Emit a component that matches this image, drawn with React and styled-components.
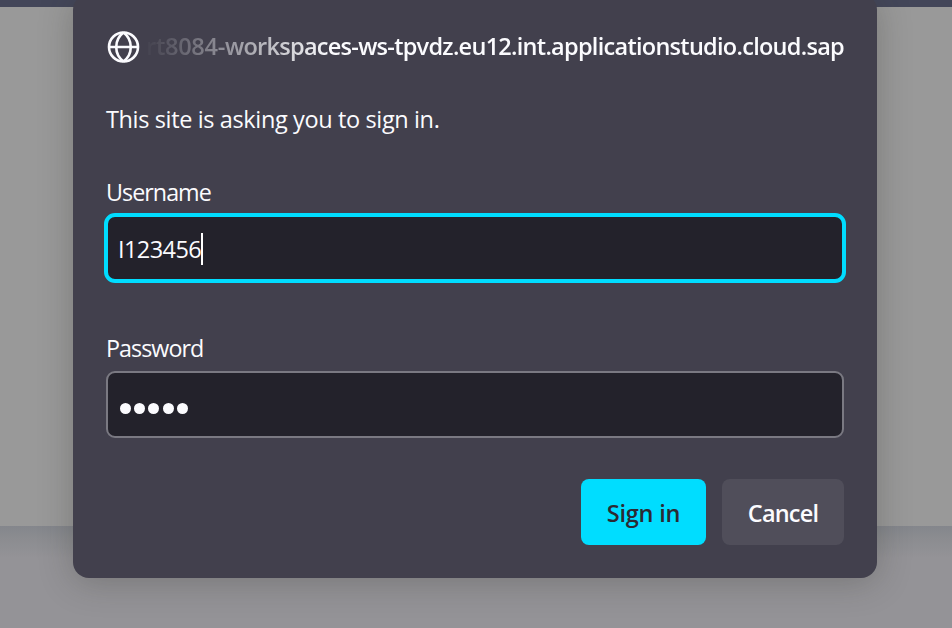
import React from "react";
import styled, { createGlobalStyle } from "styled-components";

const GlobalStyle = createGlobalStyle`
  * { box-sizing: border-box; }
  body {
    margin: 0;
    overflow: hidden;
    font-family: "Open Sans", "Noto Sans", sans-serif;
    color: #fbfbfe;
  }
`;

const Page = styled.div`
  width: 952px;
  height: 628px;
  overflow: hidden;
  display: flex;
  justify-content: center;
  align-items: flex-start;
  padding-right: 2px;
  background:
    linear-gradient(#434659, #434659) 0 0 / 100% 7px no-repeat,
    linear-gradient(#999999, #999999) 0 7px / 100% 519px no-repeat,
    linear-gradient(#84868c, #8b8c90 12px, #949397 32px) 0 526px / 100% 102px no-repeat;
`;

const Dialog = styled.form`
  width: 804px;
  height: 584px;
  margin: -6px 0 0;
  padding: 34px 33px 33px;
  border-radius: 16px;
  background: #42404d;
  box-shadow: 0 4px 34px rgba(40, 40, 34, 0.27);
  display: flex;
  flex-direction: column;
`;

const Header = styled.header`
  display: flex;
  align-items: center;
  height: 36px;
  gap: 4px;
`;

const GlobeIcon = styled.svg`
  flex: none;
  width: 34px;
  height: 34px;
  fill: none;
  stroke: #fbfbfe;
  stroke-width: 2.6;
`;

const Host = styled.div`
  flex: 1;
  display: flex;
  justify-content: flex-end;
  overflow: hidden;
  white-space: nowrap;
  font-size: 23.5px;
  line-height: 36px;
  font-weight: 600;
  mask-image: linear-gradient(to right, transparent, #000 187px);
`;

const Text = styled.span`
  letter-spacing: ${(p) => p.$tracking || 0}px;
`;

const Message = styled.p`
  margin: 37px 0 0;
  font-size: 23.5px;
  line-height: 36px;
`;

const Label = styled.label`
  margin-top: ${(p) => p.$gap}px;
  font-size: 23.3px;
  line-height: 36px;
`;

const Field = styled.div`
  display: flex;
  align-items: center;
  height: ${(p) => (p.$focused ? 70 : 67)}px;
  margin: ${(p) => (p.$focused ? "3px -2px 0" : "5px 0 0")};
  padding: ${(p) => (p.$focused ? "1px 10px 0" : "7px 11.5px 0")};
  border: ${(p) => (p.$focused ? "4px solid #00ddff" : "2px solid #7a7982")};
  border-radius: ${(p) => (p.$focused ? 11 : 9)}px;
  background: #23222b;
  font-size: 23.5px;
  line-height: 36px;
`;

const Caret = styled.span`
  width: 2px;
  height: 32px;
  background: #fff;
`;

const Dots = styled.span`
  display: flex;
  gap: 3.4px;
`;

const Dot = styled.i`
  width: 11px;
  height: 11px;
  border-radius: 50%;
  background: #fbfbfe;
`;

const Actions = styled.div`
  display: flex;
  justify-content: flex-end;
  gap: 16px;
  margin-top: auto;
`;

const Button = styled.button`
  width: ${(p) => (p.$primary ? 125 : 122)}px;
  height: 66px;
  padding: 1px 0 0;
  border: 0;
  border-radius: 8px;
  background: ${(p) => (p.$primary ? "#00ddff" : "#504e5a")};
  color: ${(p) => (p.$primary ? "#2b2a33" : "#fbfbfe")};
  font: 600 23.5px "Open Sans", "Noto Sans", sans-serif;
`;

export default function App() {
  return (
    <>
      <GlobalStyle />
      <Page>
        <Dialog>
          <Header>
            <GlobeIcon viewBox="0 0 34 34">
              <circle cx="17.5" cy="18" r="14.5" />
              <path d="M3 18h29M17.5 3.5C7.8 10.9 7.8 25.1 17.5 32.5M17.5 3.5c9.7 7.4 9.7 21.6 0 29" />
            </GlobeIcon>
            <Host>
              <Text $tracking={-0.25}>rt8084-</Text>
              <Text $tracking={-0.72}>workspaces-ws-tpvdz.eu12.int.applicationstudio.cloud.sap</Text>
            </Host>
          </Header>
          <Message>
            <Text $tracking={-0.37}>This site is asking you to sign in.</Text>
          </Message>
          <Label $gap={37}>
            <Text $tracking={-0.97}>Username</Text>
          </Label>
          <Field $focused>
            <Text $tracking={-0.58}>I123456</Text>
            <Caret />
          </Field>
          <Label $gap={47}>
            <Text $tracking={-0.95}>Password</Text>
          </Label>
          <Field>
            <Dots>
              {[0, 1, 2, 3, 4].map((n) => (
                <Dot key={n} />
              ))}
            </Dots>
          </Field>
          <Actions>
            <Button type="button" $primary>
              <Text $tracking={-0.2}>Sign in</Text>
            </Button>
            <Button type="button">
              <Text $tracking={-0.8}>Cancel</Text>
            </Button>
          </Actions>
        </Dialog>
      </Page>
    </>
  );
}
